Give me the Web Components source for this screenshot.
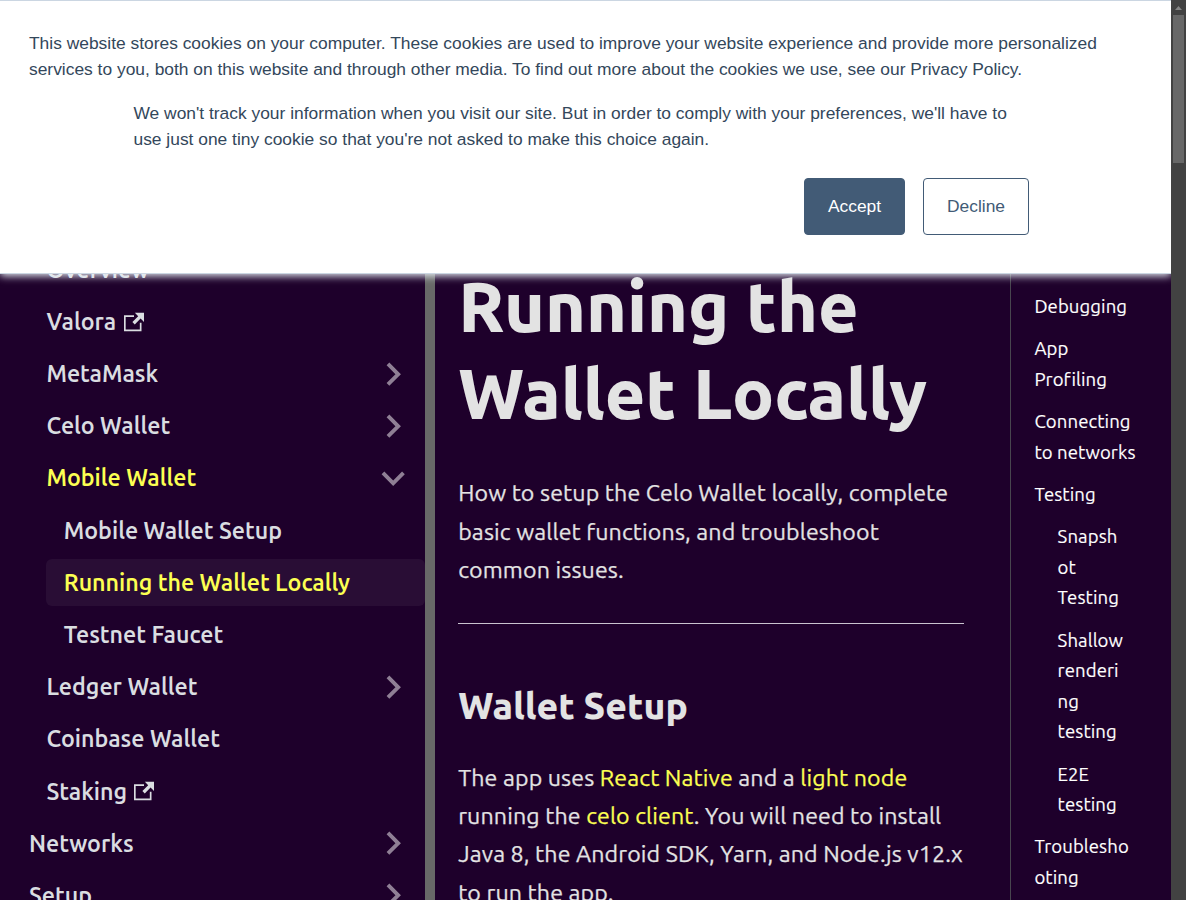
<!DOCTYPE html>
<html lang="en"><head><meta charset="utf-8"><title>Running the Wallet Locally</title>
<style>html,body{margin:0;height:100%;overflow:hidden;background:#1e002b}</style></head>
<body><docs-page></docs-page>
<script>
const SANS = 'Ubuntu, "Noto Sans", "Open Sans", sans-serif';
const define = (name, html) => customElements.define(name, class extends HTMLElement {
  connectedCallback() {
    if (this.shadowRoot) return;
    this.attachShadow({mode:'open'}).innerHTML = html;
  }
});

// A single unwrapped line of text.
define('text-line', `<style>:host{display:block;white-space:pre}</style><slot></slot>`);

define('external-icon', `<style>:host{display:block;margin-left:7.4px}svg{display:block}</style>
<svg width="20" height="20" viewBox="0 0 24 24" fill="currentColor"><path d="M21 13v10h-21v-19h12v2h-10v15h17v-8h2zm3-12h-10.988l4.035 4-6.977 7.07 2.828 2.828 6.977-7.07 4.125 4.172v-11z"/></svg>`);

define('nav-item', `<style>
:host{display:flex;align-items:center;box-sizing:border-box;height:46.4px;margin-bottom:5.8px;padding-left:29px;font:600 23.2px/29px "Ubuntu Sans",${SANS};color:#dadde1}
:host([level="2"]){padding-left:46.4px}
:host([level="3"]){margin-left:46.4px;padding-left:17.4px;border-radius:6px}
:host([active]){color:#fcff52}
:host([current]){background:rgba(255,255,255,.05)}
.t{margin-top:1.6px}
.c{margin-left:auto;margin-right:9px;display:none;width:46.4px;height:46.4px}
:host([arrow]) .c{display:block}
.c svg{display:block;transform:rotate(90deg)}
:host([arrow="down"]) .c svg{transform:rotate(180deg)}
</style><span class="t"><slot></slot></span><slot name="icon"></slot>
<span class="c"><svg width="46.4" height="46.4" viewBox="0 0 24 24" fill="#8f7f95"><path d="M7.41 15.41L12 10.83l4.59 4.58L18 14l-6-6-6 6z"/></svg></span>`);

const items = [
 [2,'Overview'],[2,'Valora','ext'],[2,'MetaMask','right'],[2,'Celo Wallet','right'],
 [2,'Mobile Wallet','down','active'],[3,'Mobile Wallet Setup'],[3,'Running the Wallet Locally','','active current'],
 [3,'Testnet Faucet'],[2,'Ledger Wallet','right'],[2,'Coinbase Wallet'],[2,'Staking','ext'],
 [1,'Networks','right'],[1,'Setup','right']];
define('side-nav', `<style>:host{display:block;box-sizing:border-box;height:900px;overflow:hidden;padding-top:246.2px;border-right:10px solid #686868}</style>` +
 items.map(([l,t,k,a='']) => `<nav-item level="${l}" ${k && k!=='ext' ? `arrow="${k}"`:''} ${a}><text-line>${t}</text-line>${k==='ext'?'<external-icon slot="icon"></external-icon>':''}</nav-item>`).join(''));

define('doc-article', `<style>
:host{display:block;box-sizing:border-box;height:900px;overflow:hidden;padding:263px 46px 0 23.2px;font:400 23.2px/38.28px ${SANS};color:#e3e3e3}
h1{margin:0;font:800 69.6px/87.2px ${SANS}}
h2{margin:0;font:800 37.2px/48px ${SANS}}
p{margin:0;letter-spacing:.12px;-webkit-text-stroke:.25px}.intro{padding-top:36px}
hr{margin:34.6px 0 57.5px;border:0;height:1px;background:#c9c3cf}
.body{padding-top:28.4px}
a{color:#fcff52}
</style>
<h1><text-line>Running the</text-line><text-line>Wallet Locally</text-line></h1>
<p class="intro"><text-line>How to setup the Celo Wallet locally, complete</text-line><text-line>basic wallet functions, and troubleshoot</text-line><text-line>common issues.</text-line></p>
<hr>
<h2><text-line>Wallet Setup</text-line></h2>
<p class="body"><text-line>The app uses <a>React Native</a> and a <a>light node</a></text-line>
<text-line>running the <a>celo client</a>. You will need to install</text-line>
<text-line>Java 8, the Android SDK, Yarn, and Node.js v12.x</text-line><text-line>to run the app.</text-line></p>`);

const toc = [[0,['Debugging']],[0,['App','Profiling']],[0,['Connecting','to networks']],[0,['Testing']],
 [1,['Snapsh','ot','Testing']],[1,['Shallow','renderi','ng','testing']],[1,['E2E','testing']],[0,['Troublesho','oting']]];
define('page-toc', `<style>
:host{display:flex;flex-direction:column;box-sizing:border-box;height:900px;overflow:hidden;gap:11.65px;padding:292px 0 0 23.4px;border-left:1px solid #48454f;font:400 18.56px/30.6px ${SANS};letter-spacing:.09px;-webkit-text-stroke:.15px;color:#fff}
.sub{padding-left:23.2px}
</style>` + toc.map(([s,ls]) => `<div class="${s?'sub':''}">${ls.map(t=>`<text-line>${t}</text-line>`).join('')}</div>`).join(''));

define('scroll-rail', `<style>:host{display:flex;flex-direction:column;align-items:center;background:#424242;height:900px}
svg{display:block}.thumb{width:11px;height:148px;background:#686868}</style>
<svg width="15" height="15"><path d="M4 10h7L7.5 6z" fill="#868686"/></svg><div class="thumb"></div>`);

define('cookie-button', `<style>:host{display:flex;align-items:center;justify-content:center;box-sizing:border-box;width:106px;height:57px;padding-bottom:2px;border:1px solid #425b76;border-radius:4px;color:#425b76;background:#fff}
:host([primary]){width:101px;background:#425b76;color:#fff}</style><slot></slot>`);

define('cookie-banner', `<style>
:host{display:block;box-sizing:border-box;height:274px;padding:29px 29px 0;background:#fff;border-top:1px solid #cbd6e2;border-bottom:1px solid #cbd6e2;box-shadow:0 2px 8px #eaf0f6;font:400 17.4px/26px "Liberation Sans",Arial,sans-serif;color:#33475b}
.second{padding:18px 0 0 104.5px}
.actions{display:flex;gap:18px;justify-content:flex-end;padding:26px 113px 0 0}
</style>
<text-line>This website stores cookies on your computer. These cookies are used to improve your website experience and provide more personalized</text-line>
<text-line>services to you, both on this website and through other media. To find out more about the cookies we use, see our Privacy Policy.</text-line>
<div class="second"><text-line>We won't track your information when you visit our site. But in order to comply with your preferences, we'll have to</text-line>
<text-line>use just one tiny cookie so that you're not asked to make this choice again.</text-line></div>
<div class="actions"><cookie-button primary><text-line>Accept</text-line></cookie-button><cookie-button><text-line>Decline</text-line></cookie-button></div>`);

define('docs-page', `<style>
:host{display:grid;grid-template-columns:1171px 15px;height:900px;overflow:hidden}
.view{position:relative;overflow:hidden;display:grid;grid-template-columns:435px 575px 161px;background:#1e002b}
cookie-banner{position:absolute;left:0;right:0;top:0}
</style><div class="view"><side-nav></side-nav><doc-article></doc-article><page-toc></page-toc><cookie-banner></cookie-banner></div><scroll-rail></scroll-rail>`);
</script></body></html>
